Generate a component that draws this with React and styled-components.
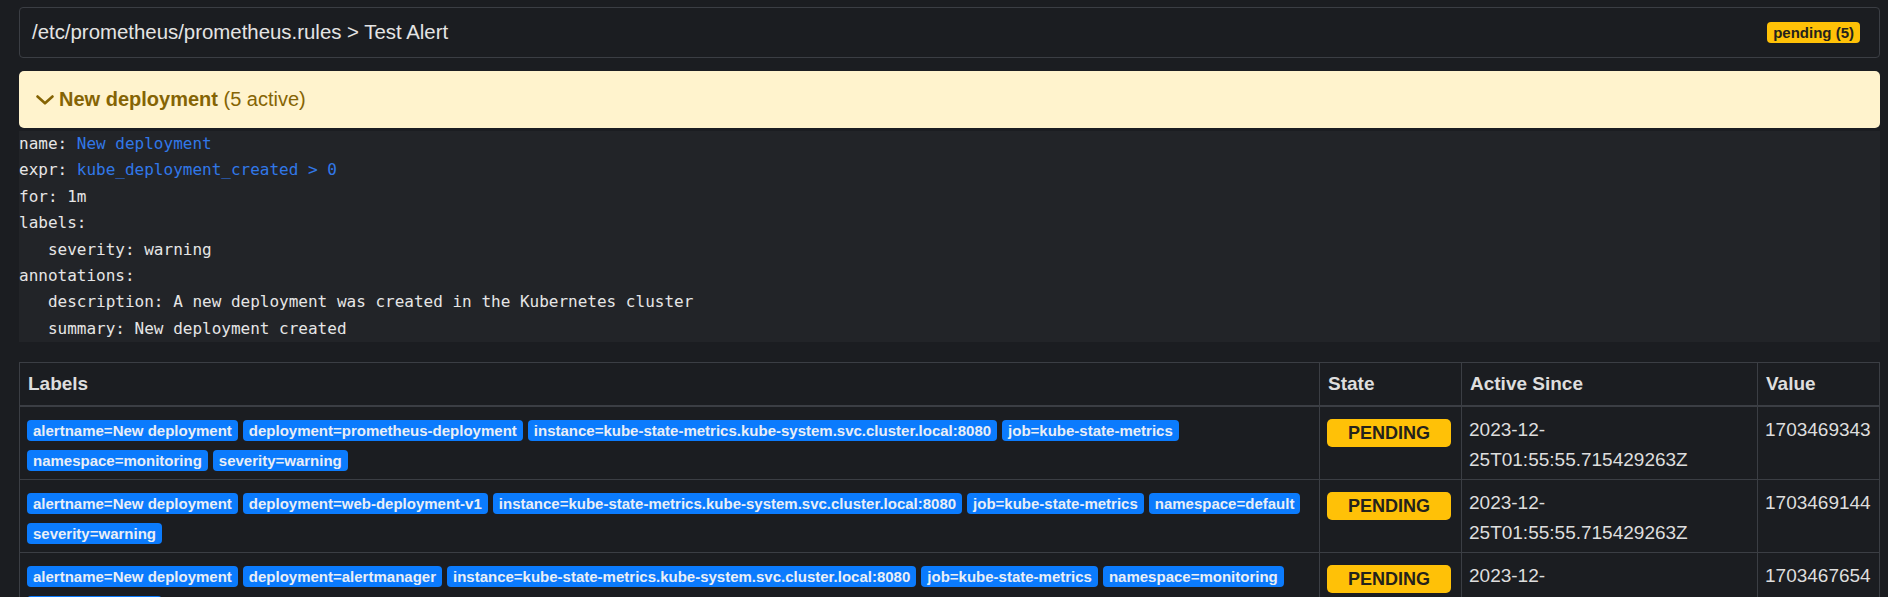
import React from 'react';
import styled, { createGlobalStyle } from 'styled-components';

const GlobalStyle = createGlobalStyle`
  html, body {
    margin: 0;
    padding: 0;
    background: #1b1d21;
  }
  body {
    font-family: "Liberation Sans", Arial, sans-serif;
    color: #e2e2e2;
  }
`;

const Page = styled.div`
  padding: 7px 8px 40px 19px;
`;

const RuleHeader = styled.div`
  display: flex;
  align-items: center;
  justify-content: space-between;
  height: 49px;
  padding: 0 19px 0 12px;
  border: 1px solid #3b3e44;
  border-radius: 4px;
  font-size: 20.4px;
  color: #e4e4e4;
`;

const Badge = styled.span`
  display: inline-block;
  font-family: "Liberation Sans", Arial, sans-serif;
  font-weight: 700;
  font-size: ${(p) => (p.$big ? '18px' : '15px')};
  line-height: ${(p) => (p.$big ? '28px' : '21px')};
  padding: ${(p) => (p.$big ? '0 21px' : '0 6px')};
  border-radius: ${(p) => (p.$big ? '5px' : '4px')};
  background: ${(p) => (p.$kind === 'warning' ? '#ffc107' : '#0b7bfd')};
  color: ${(p) => (p.$kind === 'warning' ? '#24221c' : '#e9eef6')};
  white-space: nowrap;
`;

const AlertBar = styled.div`
  display: flex;
  align-items: center;
  gap: 5px;
  height: 57px;
  margin-top: 13px;
  padding: 0 17px;
  border-radius: 5px;
  background: #fff3cd;
  color: #856404;
  font-size: 20px;
`;

const AlertName = styled.strong`
  font-weight: 700;
`;

const Code = styled.pre`
  margin: 3px 0 0;
  background: #222428;
  font-family: "DejaVu Sans Mono", "Liberation Mono", monospace;
  font-size: 16px;
  line-height: 26.4px;
  color: #e6e6e6;
  white-space: pre;
`;

const Val = styled.span`
  color: #3178e8;
`;

const Table = styled.table`
  width: 100%;
  margin-top: 20px;
  border-collapse: collapse;
  table-layout: fixed;
  font-size: 19px;
  line-height: 30px;
  color: #dedede;
  border: 1px solid #3b3e44;
`;

const Th = styled.th`
  box-sizing: border-box;
  width: ${(p) => p.$w || 'auto'};
  text-align: left;
  font-weight: 700;
  padding: 6px 8px;
  border: 1px solid #3b3e44;
  border-bottom-width: 2px;
`;

const Td = styled.td`
  vertical-align: top;
  padding: 8px 7px 4px;
  border: 1px solid #3b3e44;
`;

const LabelLine = styled.div`
  display: flex;
  align-items: center;
  gap: 5px;
  height: 30px;
`;

const StateBadge = styled(Badge)`
  vertical-align: middle;
  margin-top: 3px;
`;

function Chevron() {
  return (
    <svg width="18" height="10" viewBox="0 0 18 10" fill="none">
      <polyline points="1.5,1.5 9,8.3 16.5,1.5" stroke="#856404" strokeWidth="2.6" strokeLinecap="round" strokeLinejoin="round" />
    </svg>
  );
}

const inst = 'instance=kube-state-metrics.kube-system.svc.cluster.local:8080';

const alerts = [
  {
    lines: [
      ['alertname=New deployment', 'deployment=prometheus-deployment', inst, 'job=kube-state-metrics'],
      ['namespace=monitoring', 'severity=warning'],
    ],
    value: '1703469343',
  },
  {
    lines: [
      ['alertname=New deployment', 'deployment=web-deployment-v1', inst, 'job=kube-state-metrics', 'namespace=default'],
      ['severity=warning'],
    ],
    value: '1703469144',
  },
  {
    lines: [
      ['alertname=New deployment', 'deployment=alertmanager', inst, 'job=kube-state-metrics', 'namespace=monitoring'],
      ['severity=warning'],
    ],
    value: '1703467654',
  },
];

export default function App() {
  return (
    <>
      <GlobalStyle />
      <Page>
        <RuleHeader>
          <span>/etc/prometheus/prometheus.rules &gt; Test Alert</span>
          <Badge $kind="warning">pending (5)</Badge>
        </RuleHeader>

        <AlertBar>
          <Chevron />
          <span>
            <AlertName>New deployment</AlertName> (5 active)
          </span>
        </AlertBar>

        <Code>
{`name: `}<Val>New deployment</Val>{`
expr: `}<Val>kube_deployment_created &gt; 0</Val>{`
for: 1m
labels:
   severity: warning
annotations:
   description: A new deployment was created in the Kubernetes cluster
   summary: New deployment created`}
        </Code>

        <Table>
          <thead>
            <tr>
              <Th>Labels</Th>
              <Th $w="142px">State</Th>
              <Th $w="296px">Active Since</Th>
              <Th $w="122px">Value</Th>
            </tr>
          </thead>
          <tbody>
            {alerts.map((a, i) => (
              <tr key={i}>
                <Td>
                  {a.lines.map((line, j) => (
                    <LabelLine key={j}>
                      {line.map((l) => (
                        <Badge key={l}>{l}</Badge>
                      ))}
                    </LabelLine>
                  ))}
                </Td>
                <Td>
                  <StateBadge $kind="warning" $big>PENDING</StateBadge>
                </Td>
                <Td>2023-12-25T01:55:55.715429263Z</Td>
                <Td>{a.value}</Td>
              </tr>
            ))}
          </tbody>
        </Table>
      </Page>
    </>
  );
}
